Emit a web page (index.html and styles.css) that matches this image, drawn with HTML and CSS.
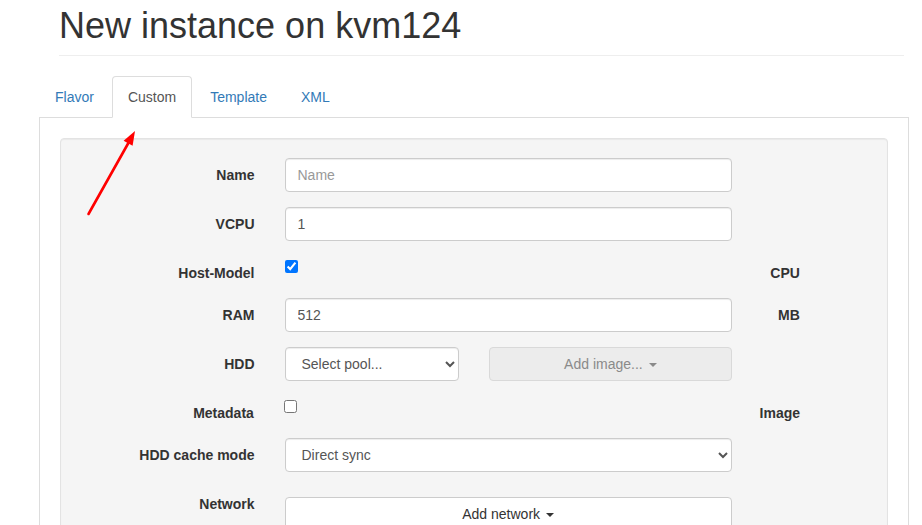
FILE: index.html
```html
<!DOCTYPE html>
<html lang="en">
<head>
<meta charset="utf-8">
<title>New instance on kvm124</title>
<link rel="stylesheet" href="styles.css">
</head>
<body>
<div class="page">
  <div class="page-header">
    <h1>New instance on kvm124</h1>
  </div>
  <ul class="tabs">
    <li class="tab"><a class="tab-link">Flavor</a></li>
    <li class="tab active"><a class="tab-link">Custom</a></li>
    <li class="tab"><a class="tab-link">Template</a></li>
    <li class="tab"><a class="tab-link">XML</a></li>
  </ul>
  <div class="tab-content">
    <div class="well">
      <form class="form">
        <div class="row">
          <label class="control-label c-label">Name</label>
          <div class="col c-wide"><input class="form-control" type="text" placeholder="Name"></div>
        </div>
        <div class="row">
          <label class="control-label c-label">VCPU</label>
          <div class="col c-wide"><input class="form-control" type="text" value="1"></div>
        </div>
        <div class="row">
          <label class="control-label c-label">Host-Model</label>
          <div class="col c-wide"><input class="check" type="checkbox" checked></div>
          <label class="control-label c-unit">CPU</label>
        </div>
        <div class="row">
          <label class="control-label c-label">RAM</label>
          <div class="col c-wide"><input class="form-control" type="text" value="512"></div>
          <label class="control-label c-unit">MB</label>
        </div>
        <div class="row">
          <label class="control-label c-label">HDD</label>
          <div class="col c-pool">
            <select class="form-control select"><option>Select pool...</option></select>
          </div>
          <div class="col c-image">
            <button type="button" class="btn btn-block btn-disabled" disabled>Add image... <span class="caret"></span></button>
          </div>
        </div>
        <div class="row">
          <label class="control-label c-label">Metadata</label>
          <div class="col c-wide"><input class="check" type="checkbox"></div>
          <label class="control-label c-unit">Image</label>
        </div>
        <div class="row">
          <label class="control-label c-label">HDD cache mode</label>
          <div class="col c-wide">
            <select class="form-control select"><option>Direct sync</option></select>
          </div>
        </div>
        <div class="row">
          <label class="control-label c-label">Network</label>
          <div class="col c-wide">
            <button type="button" class="btn btn-block btn-net">Add network <span class="caret"></span></button>
          </div>
        </div>
      </form>
    </div>
  </div>
  <svg class="arrow" width="80" height="100" viewBox="80 120 80 100" aria-hidden="true">
    <line x1="88.5" y1="208" x2="129.5" y2="135" stroke="#ff0000" stroke-width="2.6" stroke-linecap="round"/>
    <polygon points="135,125 132.6,139.8 123.6,134.8" fill="#ff0000"/>
  </svg>
</div>
</body>
</html>
```

FILE: styles.css
```css
* {
  box-sizing: border-box;
}

html,
body {
  margin: 0;
  padding: 0;
  overflow: hidden;
  background: #fff;
}

body {
  font-family: "Liberation Sans", Arial, Helvetica, sans-serif;
  font-size: 14px;
  line-height: 1.42857143;
  color: #333;
}

.page {
  position: relative;
  padding: 0 13px 0 39px;
}

.page-header {
  margin: 6px 5px 20px 20px;
  padding-bottom: 9px;
  border-bottom: 1px solid #eee;
}

.page-header h1 {
  margin: 0;
  font-size: 36px;
  font-weight: 500;
  line-height: 1.1;
  color: #333;
}

.tabs {
  display: flex;
  list-style: none;
  margin: 0;
  padding: 0;
  border-bottom: 1px solid #ddd;
}

.tab {
  margin-right: 2px;
  margin-bottom: -1px;
}

.tab-link {
  display: block;
  padding: 10px 15px;
  line-height: 20px;
  color: #337ab7;
  border: 1px solid transparent;
  border-radius: 4px 4px 0 0;
}

.tab.active .tab-link {
  color: #555;
  background: #fff;
  border-color: #ddd #ddd transparent;
}

.tab-content {
  border: 1px solid #ddd;
  border-top: none;
  padding: 20px 20px 40px;
}

.well {
  background: #f5f5f5;
  border: 1px solid #e3e3e3;
  border-radius: 4px;
  padding: 19px;
  box-shadow: inset 0 1px 1px rgba(0, 0, 0, 0.05);
}

.row {
  display: grid;
  grid-template-columns: repeat(12, 1fr);
  margin: 0 -15px 15px;
  align-items: start;
}

.col,
.control-label {
  padding: 0 15px;
}

.control-label {
  padding-top: 7px;
  margin: 0;
  text-align: right;
  font-weight: bold;
  line-height: 20px;
}

.c-label {
  grid-column: 1 / 4;
}

.c-wide {
  grid-column: 4 / 11;
}

.c-pool {
  grid-column: 4 / 7;
}

.c-image {
  grid-column: 7 / 11;
}

.c-unit {
  grid-column: 11 / 12;
  white-space: nowrap;
}

.form-control {
  display: block;
  width: 100%;
  height: 34px;
  padding: 6px 12px;
  font-family: inherit;
  font-size: 14px;
  line-height: 1.42857143;
  color: #555;
  background: #fff;
  border: 1px solid #ccc;
  border-radius: 4px;
  box-shadow: inset 0 1px 1px rgba(0, 0, 0, 0.075);
}

.form-control::placeholder {
  color: #999;
}

.select {
  padding: 6px 8px 6px 12px;
}

.check {
  display: block;
  width: 13px;
  height: 13px;
  margin: 4px 0 0;
}

.btn {
  display: inline-block;
  padding: 6px 12px;
  font-family: inherit;
  font-size: 14px;
  line-height: 1.42857143;
  text-align: center;
  border: 1px solid #ccc;
  border-radius: 4px;
  background: #fff;
  color: #333;
}

.btn-block {
  display: block;
  width: 100%;
}

.btn-disabled {
  background: #ececec;
  border-color: #d9d9d9;
  color: #8a8a8a;
}

.btn-net {
  margin-top: 10px;
}

.caret {
  display: inline-block;
  width: 0;
  height: 0;
  margin-left: 2px;
  vertical-align: middle;
  border-top: 4px solid;
  border-right: 4px solid transparent;
  border-left: 4px solid transparent;
}

.arrow {
  position: absolute;
  left: 80px;
  top: 120px;
  pointer-events: none;
}
```
